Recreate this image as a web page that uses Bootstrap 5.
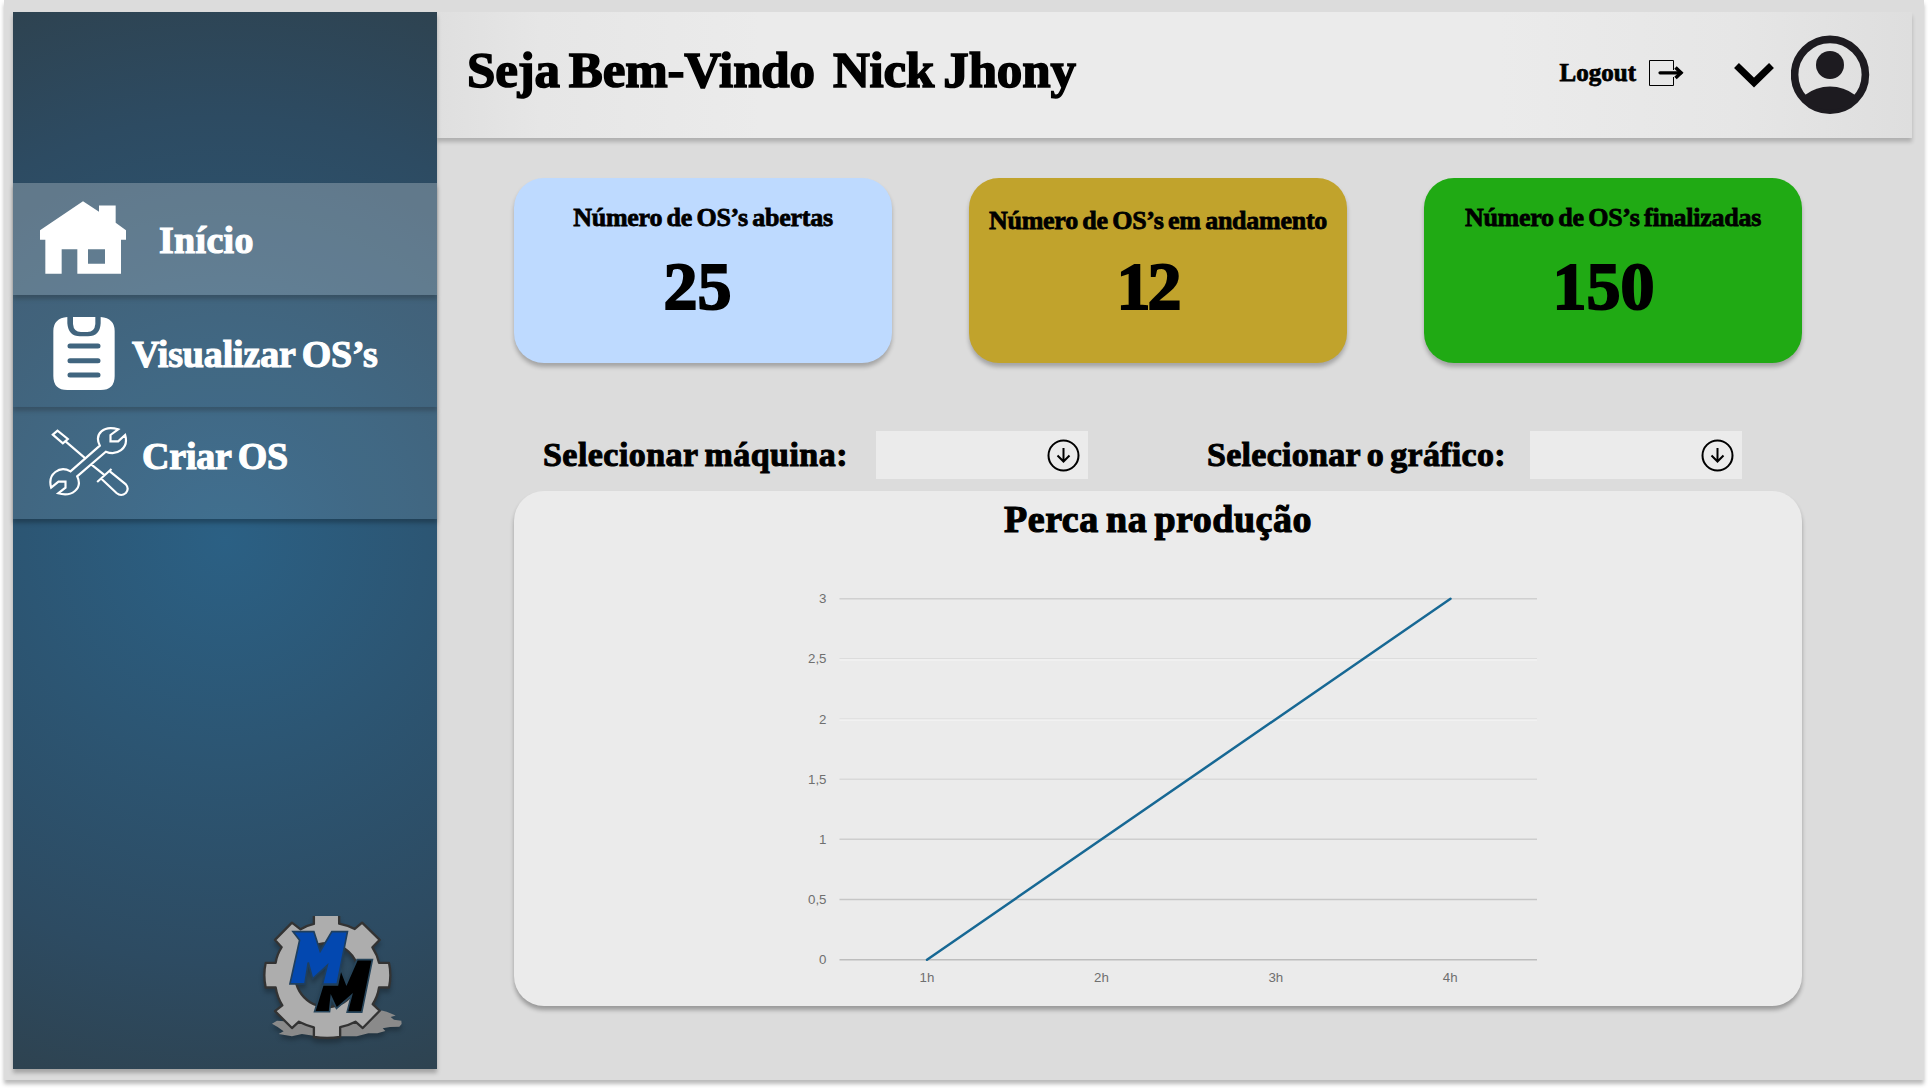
<!DOCTYPE html>
<html lang="pt-BR">
<head>
<meta charset="utf-8">
<title>Painel de OS</title>
<link href="https://cdn.jsdelivr.net/npm/bootstrap@5.3.0/dist/css/bootstrap.min.css" rel="stylesheet">
<style>
body{background:#fff;min-height:1088px;overflow:hidden;color:#000}
.display-type{font-family:"Liberation Serif",serif;font-weight:700;line-height:1;white-space:nowrap;-webkit-text-stroke:.03em currentColor;word-spacing:-.07em;margin:0}
.screen{width:1920px;height:1080px;margin-left:4px;padding:12px 12px 11px 9px;background:#dcdcdc;box-shadow:0 4px 4px rgba(0,0,0,.27)}
.side{width:424px;height:1057px;padding-top:171px;background:radial-gradient(circle 565px at 50% 50%,#2b6084 0,#2d4b62 75%,#2e4351 100%);box-shadow:0 4px 4px rgba(0,0,0,.25);z-index:1}
.side-item{height:112px;background:rgba(255,255,255,.1);box-shadow:0 4px 4px rgba(0,0,0,.25);color:#fff;text-decoration:none}
.side-item.on{background:rgba(255,255,255,.25)}
.side-item .display-type{font-size:38px}
.t-home{padding-top:38px;letter-spacing:.3px}
.t-view{padding-top:40px;letter-spacing:-.17px}
.t-new{padding-top:30px;letter-spacing:-.2px}
.ico-home{width:86px;height:73px;margin:18px 33px 0 27px}
.ico-clip{width:62px;height:73px;margin:22px 17px 0 40px}
.ico-tools{width:80px;height:70px;margin:20px 13px 0 36px}
.brand{width:147px;height:127px;margin:0 30px 26px 0;filter:drop-shadow(0 4px 2px rgba(0,0,0,.25))}
.topbar{height:126px;background:linear-gradient(90deg,#dfdfdf 0,#e6e6e6 7%,#ebebeb 22%,#ebebeb 72%,#e6e6e6 88%,#dedede 100%);box-shadow:0 4px 4px rgba(0,0,0,.2);padding:0 42px 0 30px}
.greet{font-size:51px;padding-top:33px;letter-spacing:-.16px}
.logout{font-size:25px;padding-top:48px;gap:12px;color:#000;text-decoration:none}
.chev{margin:50px 16px 0 49px}
.avatar{margin-top:23px}
.content-area{padding:40px 110px 0 77px}
.stat{width:378px;height:185px;border-radius:30px;box-shadow:0 4px 4px rgba(0,0,0,.25)}
.stat-open{background:#bedaff}
.stat-doing{background:#c1a32c}
.stat-done{background:#20aa14}
.stat-name{font-size:26px;padding-top:27px;letter-spacing:-.26px}
.stat-doing .stat-name{padding-top:30px}
.stat-num{font-size:68px;margin-top:21px;padding-right:11px}
.stat-doing .stat-num{margin-top:18px;padding-right:21px;letter-spacing:-3px}
.stat-done .stat-num{padding-right:19px}
.filters{height:48px;margin-top:68px}
.pick{width:212px;height:48px;background:#ebebeb;padding-right:8px}
.pick-label{display:flex;line-height:1;font-size:34px;margin-top:7px}
.l-machine{width:333px;padding-left:29px;margin-right:29px;letter-spacing:.45px}
.l-chart{width:297px;margin-left:119px;margin-right:26px;letter-spacing:.28px}
.panel{height:515px;margin-top:12px;background:#ebebeb;border-radius:30px;box-shadow:0 4px 4px rgba(0,0,0,.3)}
.panel-title{font-size:38px;padding-top:9px;letter-spacing:.5px}
.plot text{font-family:"Liberation Sans",sans-serif;font-size:13.300px;fill:#6f6f6f}
</style>
<script src="https://cdn.jsdelivr.net/npm/bootstrap@5.3.0/dist/js/bootstrap.bundle.min.js"></script>
</head>
<body>
<div class="screen d-flex">
  <nav class="side d-flex flex-column flex-shrink-0 position-relative">
    <a href="#" class="side-item on d-flex align-items-start">
      <svg class="ico-home" viewBox="120 93 258 218" fill="#fff"><path fill-rule="evenodd" d="M249 93 297 125V106H347V158L378 180V209H363V311H232V237H185V311H136V209H120V180ZM264 237V281H315V237Z"/></svg>
      <span class="display-type t-home">Início</span>
    </a>
    <a href="#" class="side-item d-flex align-items-start">
      <svg class="ico-clip" viewBox="160 441 184 219"><path fill="#fff" d="M202 441V460Q205 499 240 499H264Q300 499 302 460V441Q344 445 344 483V618Q344 660 302 660H202Q160 660 160 618V483Q160 445 202 441ZM219 441H286V462Q284 486 262 486H243Q221 486 219 462Z"/><path d="M210 528H294M210 572H294M210 615H294" stroke="#40657f" stroke-width="15" stroke-linecap="round"/></svg>
      <span class="display-type t-view">Visualizar OS’s</span>
    </a>
    <a href="#" class="side-item d-flex align-items-start">
      <svg class="ico-tools" viewBox="148 770 239 210" fill="none" stroke="#fff" stroke-width="6.500"><path d="M300 826C282 790 312 764 355 777L332 794V813H355L376 794C388 835 350 858 318 844L232 918C250 955 215 981 175 969L197 952V934H176L154 952C142 910 180 885 212 903ZM159 793 173 781 204 806 189 819ZM198 814 254 862M275 883 316 916M292 935 335 896M303 924 350 968Q364 980 378 968 389 955 378 942L330 903"/></svg>
      <span class="display-type t-new">Criar OS</span>
    </a>
    <svg class="brand mt-auto align-self-end" viewBox="60 78 440 382">
      <path fill="#8a8a8a" d="M95 402 110 393 145 395 200 385H380L425 362 440 366 467 377 452 382 462 390 484 393 485 403 478 411 450 412 428 416 436 424 412 431H385L350 440 230 440 185 433 155 440 115 433 130 425 112 412Z"/>
      <path fill="#adadad" stroke="#333" stroke-width="7" stroke-linejoin="round" fill-rule="evenodd" d="M221 70V102Q199 107 181 118L155 98 104 150 124 172Q109 196 106 219H76Q68 256 76 293H106Q111 323 126 347L104 364 155 415 176 396Q198 407 221 413V442Q261 448 300 442V412Q326 407 346 396L368 415 419 363 398 343Q413 320 417 293H447Q455 256 447 219H417Q412 195 397 172L419 150 366 98 344 117Q322 106 297 101V70ZM261 160A96 96 0 1 1 260 160Z"/>
      <path fill="#000" stroke="#26445a" stroke-width="5" d="M248 285H292L302 238 319 282 351 209H397L365 367H321L334 317 289 356 273 322 268 366H223Z"/>
      <path fill="#0348b0" stroke="#1f3f5e" stroke-width="5" d="M158 125H221L240 184 275 125H322L291 283H247L261 227 217 267 204 218 194 282H149L178 151Z"/>
    </svg>
  </nav>
  <div class="flex-grow-1">
    <header class="topbar d-flex align-items-start">
      <h1 class="greet display-type me-auto">Seja Bem-Vindo&nbsp; Nick Jhony</h1>
      <a href="#" class="logout d-flex">
        <span class="display-type">Logout</span>
        <svg width="36" height="28" viewBox="0 0 36 28" fill="none" stroke="#000"><path d="M25.500 10V.500H1.500V25.500H25.500V17"/><path d="M12 12.800H33" stroke-width="3.200" stroke-linecap="round"/><path d="M27.500 7.500 33 12.800 27.500 18" stroke-width="3.500"/></svg>
      </a>
      <svg class="chev" width="42" height="26" viewBox="0 0 42 26" fill="none" stroke="#000" stroke-width="7"><path d="M3.500 3.500 21 20.500 38.500 3.500"/></svg>
      <svg class="avatar" width="79" height="79" viewBox="0 0 79 79"><circle cx="39" cy="39.800" r="35.400" fill="none" stroke="#1d1b20" stroke-width="7.600"/><circle cx="39" cy="30" r="14" fill="#1d1b20"/><path d="M14 60Q25 51.500 39 51.500T64 60Q55 75 39 75T14 60Z" fill="#1d1b20"/></svg>
    </header>
    <main class="content-area">
      <section class="d-flex justify-content-between">
        <div class="stat stat-open d-flex flex-column align-items-center"><span class="stat-name display-type">Número de OS’s abertas</span><span class="stat-num display-type">25</span></div>
        <div class="stat stat-doing d-flex flex-column align-items-center"><span class="stat-name display-type">Número de OS’s em andamento</span><span class="stat-num display-type">12</span></div>
        <div class="stat stat-done d-flex flex-column align-items-center"><span class="stat-name display-type">Número de OS’s finalizadas</span><span class="stat-num display-type">150</span></div>
      </section>
      <section class="filters d-flex">
        <div class="pick-label l-machine"><span class="display-type">Selecionar máquina:</span></div>
        <div class="pick d-flex align-items-center justify-content-end"><svg width="33" height="33" viewBox="0 0 33 33" fill="none" stroke="#000" stroke-width="2"><circle cx="16.500" cy="16.500" r="15"/><path d="M16.500 9V22.500M10.500 16.500 16.500 22.500 22.500 16.500"/></svg></div>
        <div class="pick-label l-chart"><span class="display-type">Selecionar o gráfico:</span></div>
        <div class="pick d-flex align-items-center justify-content-end"><svg width="33" height="33" viewBox="0 0 33 33" fill="none" stroke="#000" stroke-width="2"><circle cx="16.500" cy="16.500" r="15"/><path d="M16.500 9V22.500M10.500 16.500 16.500 22.500 22.500 16.500"/></svg></div>
      </section>
      <section class="panel d-flex flex-column align-items-center">
        <h2 class="panel-title display-type">Perca na produção</h2>
        <svg class="plot" width="1288" height="460" viewBox="514 538 1288 460"></svg>
      </section>
    </main>
  </div>
</div>
<script>
const plot=document.querySelector('.plot');let s='';
['0','0,5','1','1,5','2','2,5','3'].forEach((t,i)=>{const y=959.7-i*60.17;
 s+=`<path d="M839.500 ${y}H1537" stroke="${['#bdbdbd','#c6c6c6','#cecece','#d9d9d9','#dedede','#dcdcdc','#d0d0d0'][i]}" stroke-width="1.500"/><text x="826.500" y="${y+4.5}" text-anchor="end">${t}</text>`;
 if(t==='2'||t==='2,5')s+=`<path d="M839.500 ${y+1}H1537" stroke="#f8f8f8"/>`});
['1h','2h','3h','4h'].forEach((t,i)=>{s+=`<text x="${927+i*174.4}" y="982" text-anchor="middle">${t}</text>`});
s+='<path d="M927 959.700 1450.500 598.700" stroke="#176894" stroke-width="2.500" stroke-linecap="round"/>';
plot.innerHTML=s;
</script>
</body>
</html>
